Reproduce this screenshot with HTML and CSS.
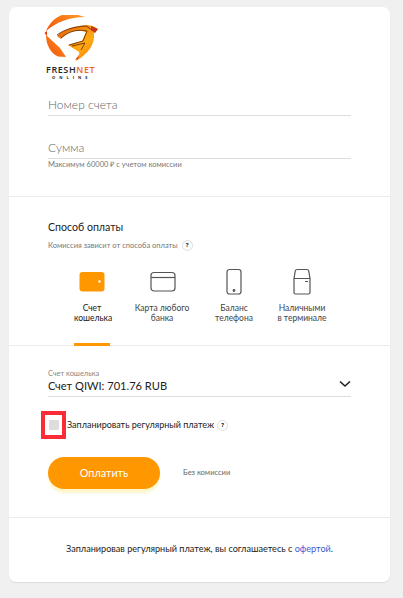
FILE: index.html
```html
<!DOCTYPE html>
<html lang="ru">
<head>
<meta charset="utf-8">
<title>FreshNet Online</title>
<link rel="stylesheet" href="styles.css">
</head>
<body>
<main class="card">
  <section class="account">
    <div class="brand">
      <svg class="mark" width="56" height="48" viewBox="44 14 56 48" aria-hidden="true">
        <defs>
          <linearGradient id="ring" x1="0" y1="1" x2="1" y2="0"><stop offset="0" stop-color="#f4510c"/><stop offset=".55" stop-color="#f77616"/><stop offset="1" stop-color="#ff9a27"/></linearGradient>
          <linearGradient id="bird" x1="0" y1="0" x2="1" y2="1"><stop offset="0" stop-color="#e35a09"/><stop offset=".6" stop-color="#ffab12"/><stop offset="1" stop-color="#f36a09"/></linearGradient>
        </defs>
        <path fill="url(#ring)" d="M46 31C49 24 54 18 62 15H78L85 17C69 17 57 22 46 31Z"/>
        <path fill="url(#ring)" d="M46 35C46 44 50 53 58 56.500L66 57L60 48Z"/>
        <path fill="url(#bird)" d="M57 36C63 30 73 26 87 25L93 26L98 29L94 33C95 44 89 53 76 61C78 57 80 54 79 52L68 45L82 41L86 32C76 29 68 31 61 39Z"/>
        <path fill="none" stroke="#6b3209" stroke-width=".9" d="M57 35C65 29 74 27 86 26L92 30M61 38C69 31 78 29 87 31L83 41L69 45M72 46L85 43L81 50"/>
        <path fill="#c8321c" d="M91 26L98 29L95 33L91 30Z"/>
        <path fill="#e33d0b" d="M44.500 33L47 31V36ZM75 60L79 55L78 59Z"/>
      </svg>
      <div class="name">FRESH<span>NET</span></div>
      <div class="online">ONLINE</div>
    </div>
    <div class="field number"><span>Номер счета</span></div>
    <div class="field sum"><span>Сумма</span></div>
    <p class="hint">Максимум 60000 ₽ с учетом комиссии</p>
  </section>

  <section class="payment">
    <h2>Способ оплаты</h2>
    <div class="fee"><span>Комиссия зависит от способа оплаты</span><i class="help">?</i></div>
    <div class="methods">
      <div class="method active">
        <svg width="28" height="28" viewBox="0 0 28 28"><rect x="1.500" y="4" width="25" height="19.500" rx="3" fill="#ff9700"/><circle cx="21.500" cy="13.500" r="1.200" fill="#fff"/></svg>
        <span>Счет<br>кошелька</span>
      </div>
      <div class="method">
        <svg width="28" height="28" viewBox="0 0 28 28"><rect x="3" y="4.500" width="24" height="18.500" rx="3"/><path d="M3 9.500H27"/></svg>
        <span>Карта любого<br>банка</span>
      </div>
      <div class="method phone">
        <svg width="28" height="28" viewBox="0 0 28 28"><rect x="7" y="1.500" width="14" height="24.500" rx="2.500"/><circle cx="14" cy="22.500" r=".8" fill="#333"/></svg>
        <span>Баланс<br>телефона</span>
      </div>
      <div class="method">
        <svg width="28" height="28" viewBox="0 0 28 28"><path d="M6 10.500L7.200 3.300Q7.500 1.500 9.300 1.500H18.700Q20.500 1.500 20.800 3.300L22 10.500ZM6 10.500V24.500Q6 26 7.500 26H20.500Q22 26 22 24.500V10.500M17 13.500H20"/></svg>
        <span>Наличными<br>в терминале</span>
      </div>
    </div>
  </section>

  <section class="confirm">
    <div class="source">
      <div class="caption"><span>Счет кошелька</span></div>
      <div class="value"><span>Счет QIWI: 701.76 RUB</span><svg width="12" height="8" viewBox="0 0 12 8"><path d="M1 1.500L6 6L11 1.500" fill="none" stroke="#222" stroke-width="1.600"/></svg></div>
    </div>
    <div class="schedule"><div class="frame"><div class="checkbox"></div></div><span>Запланировать регулярный платеж</span><i class="help">?</i></div>
    <div class="submit"><button>Оплатить</button><span>Без комиссии</span></div>
  </section>

  <footer><span>Запланировав регулярный платеж, вы соглашаетесь с <a>офертой</a>.</span></footer>
</main>
</body>
</html>
```
FILE: styles.css
```css
* { box-sizing: border-box; }
body {
  margin: 0;
  padding: 7px 13px 16px 9px;
  background: #f0f0f0;
  font-family: Lato, "Open Sans", sans-serif;
  color: #222;
}
.card {
  width: 381px;
  height: 575px;
  background: #fff;
  border-radius: 7px;
  box-shadow: 0 1px 1px #ddd;
  overflow: hidden;
}
section, footer { padding: 0 39px; }
section { border-bottom: 1px solid #ebebeb; }
span { white-space: nowrap; }

.account { height: 190px; padding-top: 7px; }
.brand { width: 56px; height: 79px; margin-left: -4px; }
.mark { display: block; }
.name { width: 51px; margin-left: 2px; padding-top: 3px; font: 600 9px/10px "Open Sans", sans-serif; letter-spacing: .6px; white-space: nowrap; }
.name span { color: #ee681d; }
.online { margin-left: 8px; font: 700 4px/5px "Open Sans", sans-serif; letter-spacing: 4px; white-space: nowrap; }
.field { border-bottom: 1px solid #ddd; color: #666; font-size: 12px; line-height: 16px; font-weight: 300; }
.number { height: 23px; padding-top: 4px; }
.sum { height: 43px; padding-top: 24px; }
.hint { margin: 1px 0 0; color: #777; font-size: 7.500px; line-height: 9px; white-space: nowrap; }

.payment { height: 149px; padding-top: 22px; }
h2 { margin: 0; font-size: 10.600px; line-height: 16px; font-weight: 400; }
.fee { display: flex; align-items: center; gap: 4px; height: 12px; margin-top: 4px; color: #777; font-size: 7.500px; }
.help {
  width: 11px;
  height: 11px;
  border: 1px solid #ddd;
  border-radius: 50%;
  color: #222;
  font: 700 6px/9px "Open Sans", sans-serif;
  text-align: center;
}
.methods { display: grid; grid-template-columns: repeat(4, 70px); margin: 17px 0 0 9px; }
.method { height: 78px; text-align: center; color: #444; font-size: 8.500px; line-height: 10px; }
.method svg { display: block; margin: 0 auto 7px; fill: none; stroke: #555; stroke-width: 1.200; }
.phone { margin-left: 4px; }
.active { width: 36px; margin-left: 17px; border-bottom: 3px solid #ff9700; color: #222; }
.active svg { margin-left: 4px; stroke: none; }

.confirm { height: 172px; padding-top: 23px; }
.source { height: 28px; border-bottom: 1px solid #ddd; }
.caption { height: 9px; font-size: 7.400px; line-height: 9px; color: #888; }
.value { display: flex; justify-content: space-between; align-items: center; font-size: 11.100px; line-height: 16px; }
.value svg { margin-top: -4px; }
.schedule { display: flex; align-items: center; height: 28px; margin: 14px 0 0 -7px; font-size: 9px; }
.schedule > span { padding-bottom: 2px; }
.schedule .help { margin-left: 3px; }
.frame { display: grid; place-items: center; width: 25px; height: 28px; margin-right: 1px; border: 4px solid #fb2c36; }
.checkbox { width: 10px; height: 10px; background: #ddd; border-radius: 1px; }
.submit { display: flex; align-items: center; margin-top: 18px; }
button {
  width: 112px;
  height: 32px;
  margin-right: 23px;
  padding: 0 0 2px;
  border: 0;
  border-radius: 16px;
  background: #ff9700;
  box-shadow: 0 4px 2px #fff6cc;
  color: #fff;
  font: 400 10.800px Lato, "Open Sans", sans-serif;
}
.submit span { color: #666; font-size: 7.500px; padding-bottom: 2px; }
footer { height: 64px; padding-top: 24px; text-align: center; font-size: 9.120px; line-height: 14px; }
footer a { color: #3a5bd0; }
```
